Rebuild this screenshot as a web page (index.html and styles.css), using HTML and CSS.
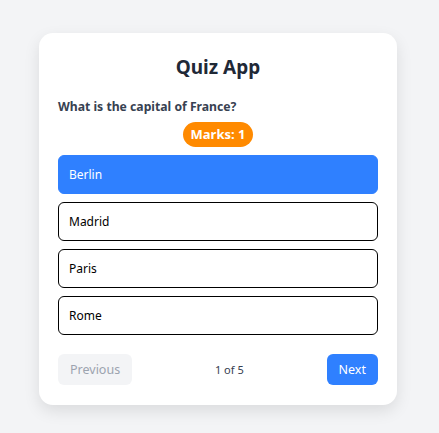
FILE: index.html
```html
<!DOCTYPE html>
<html>
<head>
<meta charset="utf-8">
<link rel="stylesheet" href="styles.css">
</head>
<body>
<div class="page">
  <div class="card">
    <h1 class="title">Quiz App</h1>
    <p class="question">What is the capital of France?</p>
    <div class="badge-row"><span class="badge">Marks: 1</span></div>
    <div class="options">
      <button class="option selected">Berlin</button>
      <button class="option">Madrid</button>
      <button class="option">Paris</button>
      <button class="option">Rome</button>
    </div>
    <div class="footer">
      <button class="btn prev">Previous</button>
      <span class="count">1 of 5</span>
      <button class="btn next">Next</button>
    </div>
  </div>
</div>
</body>
</html>
```
FILE: styles.css
```css
* { box-sizing: border-box; }
html, body { margin: 0; padding: 0; }
body {
  background: #f3f4f6;
  font-family: "Noto Sans", "Open Sans", sans-serif;
  width: 439px;
  height: 433px;
}
.page {
  padding: 33px 0 0 39px;
  display: flex;
}
.card {
  width: 358px;
  background: #fff;
  border-radius: 14px;
  padding: 20px 19px 20px 19px;
  box-shadow: 0 6px 16px rgba(0,0,0,0.10);
}
.title {
  margin: 0 0 16px;
  font-size: 19px;
  line-height: 28px;
  font-weight: 700;
  text-align: center;
  color: #1f2937;
}
.question {
  margin: 0 0 5px;
  font-size: 12.2px;
  line-height: 20px;
  font-weight: 700;
  color: #374151;
}
.badge-row {
  display: flex;
  justify-content: center;
  margin-bottom: 8px;
}
.badge {
  background: #ff8a00;
  color: #fff;
  font-weight: 700;
  font-size: 13px;
  line-height: 25px;
  height: 25px;
  padding: 0 8px;
  border-radius: 13px;
}
.options {
  display: flex;
  flex-direction: column;
  gap: 8px;
}
.option {
  display: block;
  width: 100%;
  height: 39px;
  text-align: left;
  padding: 0 10px;
  font-family: inherit;
  font-size: 12px;
  color: #000;
  background: #fff;
  border: 1px solid #000;
  border-radius: 6px;
}
.option.selected {
  background: #2f80ff;
  border-color: #2f80ff;
  color: #fff;
}
.footer {
  margin-top: 19px;
  display: flex;
  align-items: center;
  justify-content: space-between;
}
.btn {
  height: 31px;
  padding: 0 12px;
  border: none;
  border-radius: 6px;
  font-family: inherit;
  font-size: 12.5px;
}
.prev {
  background: #f3f4f6;
  color: #9ca3af;
}
.next {
  background: #2f80ff;
  color: #fff;
}
.count {
  font-size: 11px;
  color: #374151;
}
```
